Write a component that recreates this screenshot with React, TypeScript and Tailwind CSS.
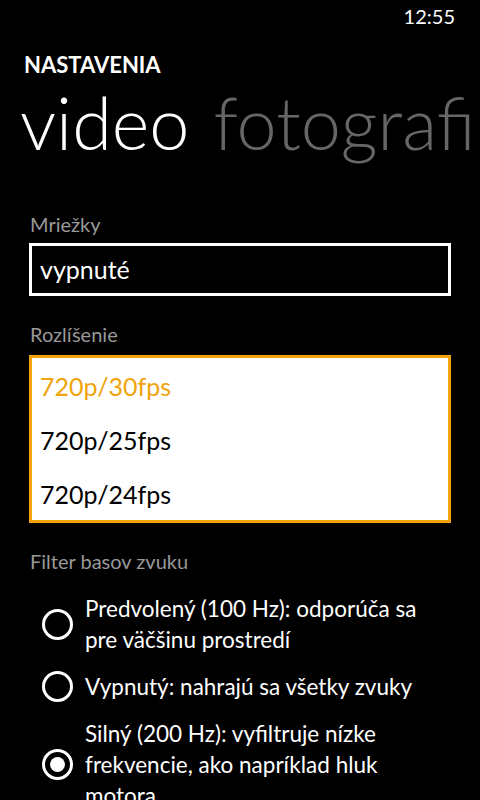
import React from "react";

function Radio({ checked }: { checked?: boolean }) {
  return (
    <div className="w-[31px] h-[31px] shrink-0 rounded-full border-[3px] border-white flex items-center justify-center">
      {checked && <div className="w-[15px] h-[15px] rounded-full bg-white" />}
    </div>
  );
}

export default function App() {
  return (
    <div className="w-[480px] h-[800px] bg-black text-white overflow-hidden font-['Lato',sans-serif]">
      {/* status bar */}
      <div className="flex justify-end pt-[6px] pr-[25px]">
        <span className="text-[20px] leading-[20px]">12:55</span>
      </div>

      {/* title */}
      <div className="mt-[28px] pl-[24px] text-[22px] leading-[22px] font-bold">NASTAVENIA</div>

      {/* pivot header */}
      <div className="mt-[10px] pl-[20px] flex gap-[24px] whitespace-nowrap text-[72px] leading-[72px] font-light">
        <span>video</span>
        <span className="text-[#666666]">fotografi</span>
      </div>

      <div className="px-[29px]">
        <div className="mt-[56px] pl-[1px] text-[20px] leading-[20px] text-[#999999]">Mriežky</div>
        <div className="mt-[9px] h-[53px] border-[3px] border-white flex items-center pl-[8px] text-[25px]">
          vypnuté
        </div>

        <div className="mt-[28px] pl-[1px] text-[20px] leading-[20px] text-[#999999]">Rozlíšenie</div>
        <div className="mt-[11px] border-[3px] border-[#F0A30A] bg-white text-[25px]">
          <div className="h-[54px] leading-[56px] pl-[8px] text-[#F0A30A]">720p/30fps</div>
          <div className="h-[54px] leading-[56px] pl-[8px] text-black">720p/25fps</div>
          <div className="h-[54px] leading-[56px] pl-[8px] text-black">720p/24fps</div>
        </div>

        <div className="mt-[28px] pl-[1px] text-[20px] leading-[20px] text-[#999999]">Filter basov zvuku</div>

        <div className="mt-[22px] flex flex-col gap-[16px] pl-[13px] text-[22.5px] leading-[31px]">
          <div className="flex items-center gap-[12px]">
            <Radio />
            <div className="whitespace-nowrap">
              Predvolený (100 Hz): odporúča sa
              <br />
              pre väčšinu prostredí
            </div>
          </div>
          <div className="flex items-center gap-[12px]">
            <Radio />
            <div className="whitespace-nowrap">Vypnutý: nahrajú sa všetky zvuky</div>
          </div>
          <div className="flex items-center gap-[12px]">
            <Radio checked />
            <div className="whitespace-nowrap">
              Silný (200 Hz): vyfiltruje nízke
              <br />
              frekvencie, ako napríklad hluk
              <br />
              motora
            </div>
          </div>
        </div>
      </div>
    </div>
  );
}
